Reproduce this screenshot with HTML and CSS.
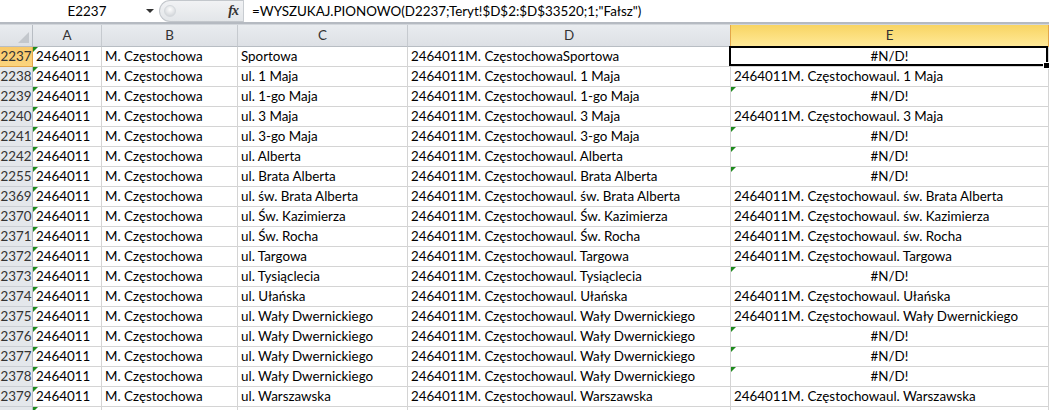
FILE: index.html
```html
<!DOCTYPE html>
<html lang="pl">
<head>
    <meta charset="UTF-8">
    <title>Arkusz - Teryt</title>
    <link rel="stylesheet" href="styles.css">
</head>
<body>
    <!-- Pasek formuły -->
    <div class="formula-bar">
        <div class="name-box">
            <span class="name-text">E2237</span>
            <span class="name-arrow"></span>
        </div>
        <div class="splitter">
            <span class="knob"></span>
            <span class="fx">fx</span>
        </div>
        <div class="formula">=WYSZUKAJ.PIONOWO(D2237;Teryt!$D$2:$D$33520;1;"Fałsz")</div>
    </div>
    <div class="sep"></div>

    <!-- Nagłówki kolumn -->
    <div class="hrow">
        <div class="corner"><span class="corner-tri"></span></div>
        <div class="hc ca">A</div>
        <div class="hc cb">B</div>
        <div class="hc cc">C</div>
        <div class="hc cd">D</div>
        <div class="hc ce hc-active">E</div>
    </div>

    <div class="sheet">
        <div class="row">
            <div class="rh rh-active">2237</div>
            <div class="c ca tri">2464011</div>
            <div class="c cb">M. Częstochowa</div>
            <div class="c cc">Sportowa</div>
            <div class="c cd">2464011M. CzęstochowaSportowa</div>
            <div class="c ce err active">#N/D!</div>
        </div>
        <div class="row">
            <div class="rh">2238</div>
            <div class="c ca tri">2464011</div>
            <div class="c cb">M. Częstochowa</div>
            <div class="c cc">ul. 1 Maja</div>
            <div class="c cd">2464011M. Częstochowaul. 1 Maja</div>
            <div class="c ce">2464011M. Częstochowaul. 1 Maja</div>
        </div>
        <div class="row">
            <div class="rh">2239</div>
            <div class="c ca tri">2464011</div>
            <div class="c cb">M. Częstochowa</div>
            <div class="c cc">ul. 1-go Maja</div>
            <div class="c cd">2464011M. Częstochowaul. 1-go Maja</div>
            <div class="c ce err tri">#N/D!</div>
        </div>
        <div class="row">
            <div class="rh">2240</div>
            <div class="c ca tri">2464011</div>
            <div class="c cb">M. Częstochowa</div>
            <div class="c cc">ul. 3 Maja</div>
            <div class="c cd">2464011M. Częstochowaul. 3 Maja</div>
            <div class="c ce">2464011M. Częstochowaul. 3 Maja</div>
        </div>
        <div class="row">
            <div class="rh">2241</div>
            <div class="c ca tri">2464011</div>
            <div class="c cb">M. Częstochowa</div>
            <div class="c cc">ul. 3-go Maja</div>
            <div class="c cd">2464011M. Częstochowaul. 3-go Maja</div>
            <div class="c ce err tri">#N/D!</div>
        </div>
        <div class="row">
            <div class="rh">2242</div>
            <div class="c ca tri">2464011</div>
            <div class="c cb">M. Częstochowa</div>
            <div class="c cc">ul. Alberta</div>
            <div class="c cd">2464011M. Częstochowaul. Alberta</div>
            <div class="c ce err tri">#N/D!</div>
        </div>
        <div class="row">
            <div class="rh">2255</div>
            <div class="c ca tri">2464011</div>
            <div class="c cb">M. Częstochowa</div>
            <div class="c cc">ul. Brata Alberta</div>
            <div class="c cd">2464011M. Częstochowaul. Brata Alberta</div>
            <div class="c ce err tri">#N/D!</div>
        </div>
        <div class="row">
            <div class="rh">2369</div>
            <div class="c ca tri">2464011</div>
            <div class="c cb">M. Częstochowa</div>
            <div class="c cc">ul. św. Brata Alberta</div>
            <div class="c cd">2464011M. Częstochowaul. św. Brata Alberta</div>
            <div class="c ce">2464011M. Częstochowaul. św. Brata Alberta</div>
        </div>
        <div class="row">
            <div class="rh">2370</div>
            <div class="c ca tri">2464011</div>
            <div class="c cb">M. Częstochowa</div>
            <div class="c cc">ul. Św. Kazimierza</div>
            <div class="c cd">2464011M. Częstochowaul. Św. Kazimierza</div>
            <div class="c ce">2464011M. Częstochowaul. św. Kazimierza</div>
        </div>
        <div class="row">
            <div class="rh">2371</div>
            <div class="c ca tri">2464011</div>
            <div class="c cb">M. Częstochowa</div>
            <div class="c cc">ul. Św. Rocha</div>
            <div class="c cd">2464011M. Częstochowaul. Św. Rocha</div>
            <div class="c ce">2464011M. Częstochowaul. św. Rocha</div>
        </div>
        <div class="row">
            <div class="rh">2372</div>
            <div class="c ca tri">2464011</div>
            <div class="c cb">M. Częstochowa</div>
            <div class="c cc">ul. Targowa</div>
            <div class="c cd">2464011M. Częstochowaul. Targowa</div>
            <div class="c ce">2464011M. Częstochowaul. Targowa</div>
        </div>
        <div class="row">
            <div class="rh">2373</div>
            <div class="c ca tri">2464011</div>
            <div class="c cb">M. Częstochowa</div>
            <div class="c cc">ul. Tysiąclecia</div>
            <div class="c cd">2464011M. Częstochowaul. Tysiąclecia</div>
            <div class="c ce err tri">#N/D!</div>
        </div>
        <div class="row">
            <div class="rh">2374</div>
            <div class="c ca tri">2464011</div>
            <div class="c cb">M. Częstochowa</div>
            <div class="c cc">ul. Ułańska</div>
            <div class="c cd">2464011M. Częstochowaul. Ułańska</div>
            <div class="c ce">2464011M. Częstochowaul. Ułańska</div>
        </div>
        <div class="row">
            <div class="rh">2375</div>
            <div class="c ca tri">2464011</div>
            <div class="c cb">M. Częstochowa</div>
            <div class="c cc">ul. Wały Dwernickiego</div>
            <div class="c cd">2464011M. Częstochowaul. Wały Dwernickiego</div>
            <div class="c ce">2464011M. Częstochowaul. Wały Dwernickiego</div>
        </div>
        <div class="row">
            <div class="rh">2376</div>
            <div class="c ca tri">2464011</div>
            <div class="c cb">M. Częstochowa</div>
            <div class="c cc">ul. Wały Dwernickiego</div>
            <div class="c cd">2464011M. Częstochowaul. Wały Dwernickiego</div>
            <div class="c ce err tri">#N/D!</div>
        </div>
        <div class="row">
            <div class="rh">2377</div>
            <div class="c ca tri">2464011</div>
            <div class="c cb">M. Częstochowa</div>
            <div class="c cc">ul. Wały Dwernickiego</div>
            <div class="c cd">2464011M. Częstochowaul. Wały Dwernickiego</div>
            <div class="c ce err tri">#N/D!</div>
        </div>
        <div class="row">
            <div class="rh">2378</div>
            <div class="c ca tri">2464011</div>
            <div class="c cb">M. Częstochowa</div>
            <div class="c cc">ul. Wały Dwernickiego</div>
            <div class="c cd">2464011M. Częstochowaul. Wały Dwernickiego</div>
            <div class="c ce err tri">#N/D!</div>
        </div>
        <div class="row">
            <div class="rh">2379</div>
            <div class="c ca tri">2464011</div>
            <div class="c cb">M. Częstochowa</div>
            <div class="c cc">ul. Warszawska</div>
            <div class="c cd">2464011M. Częstochowaul. Warszawska</div>
            <div class="c ce">2464011M. Częstochowaul. Warszawska</div>
        </div>
        <div class="row">
            <div class="rh"></div>
            <div class="c ca tri"></div>
            <div class="c cb"></div>
            <div class="c cc"></div>
            <div class="c cd"></div>
            <div class="c ce"></div>
        </div>
    </div>
</body>
</html>
```

FILE: styles.css
```css
/* Ogólne */
* {
    box-sizing: border-box;
    margin: 0;
    padding: 0;
}

body {
    width: 1049px;
    height: 410px;
    overflow: hidden;
    background: #fff;
    color: #000;
    font-family: Lato, "Liberation Sans", sans-serif;
    font-size: 13.4px;
}

/* Pasek formuły */
.formula-bar {
    display: flex;
    height: 22px;
    background: #fff;
}

.name-box {
    width: 159px;
    display: flex;
    align-items: center;
}

.name-text {
    flex: 1;
    text-align: center;
    padding-left: 28px;
}

.name-arrow {
    width: 0;
    height: 0;
    margin-right: 5px;
    border-left: 4px solid transparent;
    border-right: 4px solid transparent;
    border-top: 4px solid #333;
}

.splitter {
    width: 84px;
    display: flex;
    align-items: center;
    justify-content: space-between;
    background: linear-gradient(#f1f2f4, #e3e6e9);
    border: 1px solid #c3c7cc;
    border-right: none;
    border-radius: 11px 0 0 11px;
}

.knob {
    width: 12px;
    height: 12px;
    margin-left: 4px;
    border-radius: 50%;
    background: radial-gradient(circle at 50% 35%, #fdfdfd, #c9cdd2);
    border: 1px solid #d4d8dc;
}

.fx {
    margin-right: 5px;
    font-family: "Liberation Serif", serif;
    font-style: italic;
    font-weight: bold;
    font-size: 14px;
    color: #333;
    letter-spacing: -1px;
}

.formula {
    flex: 1;
    padding-left: 8px;
    line-height: 22px;
    border-left: 1px solid #c8ccd1;
    white-space: nowrap;
}

.sep {
    height: 2px;
    background: #b5bac1;
}

/* Szerokości kolumn */
.rh, .corner { width: 33px; }
.ca { width: 69px; }
.cb { width: 136px; }
.cc { width: 170px; }
.cd { width: 323px; }
.ce { width: 318px; }

/* Nagłówki */
.hrow {
    display: flex;
    height: 23px;
    border-top: 1px solid #d2d6db;
}

.hc, .corner {
    height: 22px;
    line-height: 21px;
    text-align: center;
    color: #333;
    background: linear-gradient(#e9ecef, #dde0e5);
    border-right: 1px solid #c6cacf;
    border-bottom: 1px solid #b8bdc3;
}

.corner {
    position: relative;
    border-right-color: #b8bdc3;
}

.corner-tri {
    position: absolute;
    right: 3px;
    bottom: 3px;
    width: 0;
    height: 0;
    border-left: 11px solid transparent;
    border-bottom: 11px solid #c3c7cc;
}

.hc-active {
    background: linear-gradient(#f8d462, #ffe998);
    border-left: 1px solid #e2a64a;
    border-right-color: #e2a64a;
    border-bottom-color: #e2a64a;
    margin-left: -1px;
    width: 319px;
}

/* Wiersze */
.row {
    display: flex;
    height: 20px;
}

.rh {
    line-height: 19px;
    text-align: center;
    color: #333;
    white-space: nowrap;
    background: #e4e7eb;
    border-right: 1px solid #b8bdc3;
    border-bottom: 1px solid #c9cdd2;
}

.rh-active {
    background: linear-gradient(#f8c96a, #fbd47e);
    border-right-color: #e2a64a;
    border-bottom-color: #e2a64a;
}

.c {
    position: relative;
    padding: 0 3px;
    line-height: 19px;
    white-space: nowrap;
    overflow: hidden;
    border-right: 1px solid #d4d4d4;
    border-bottom: 1px solid #d4d4d4;
}

.c.active {
    overflow: visible;
}

.err {
    text-align: center;
}

/* Zielony trójkąt błędu */
.tri::before {
    content: '';
    position: absolute;
    left: 0;
    top: 0;
    width: 0;
    height: 0;
    border-top: 5px solid #1d8a1d;
    border-right: 5px solid transparent;
}

/* Aktywna komórka */
.active::after {
    content: '';
    position: absolute;
    left: -2px;
    top: -1px;
    right: 0;
    bottom: 0;
    border: 2px solid #000;
}

.active::before {
    content: '';
    position: absolute;
    right: -2px;
    bottom: -3px;
    width: 5px;
    height: 5px;
    background: #000;
    border: 1px solid #fff;
    z-index: 1;
}
```
